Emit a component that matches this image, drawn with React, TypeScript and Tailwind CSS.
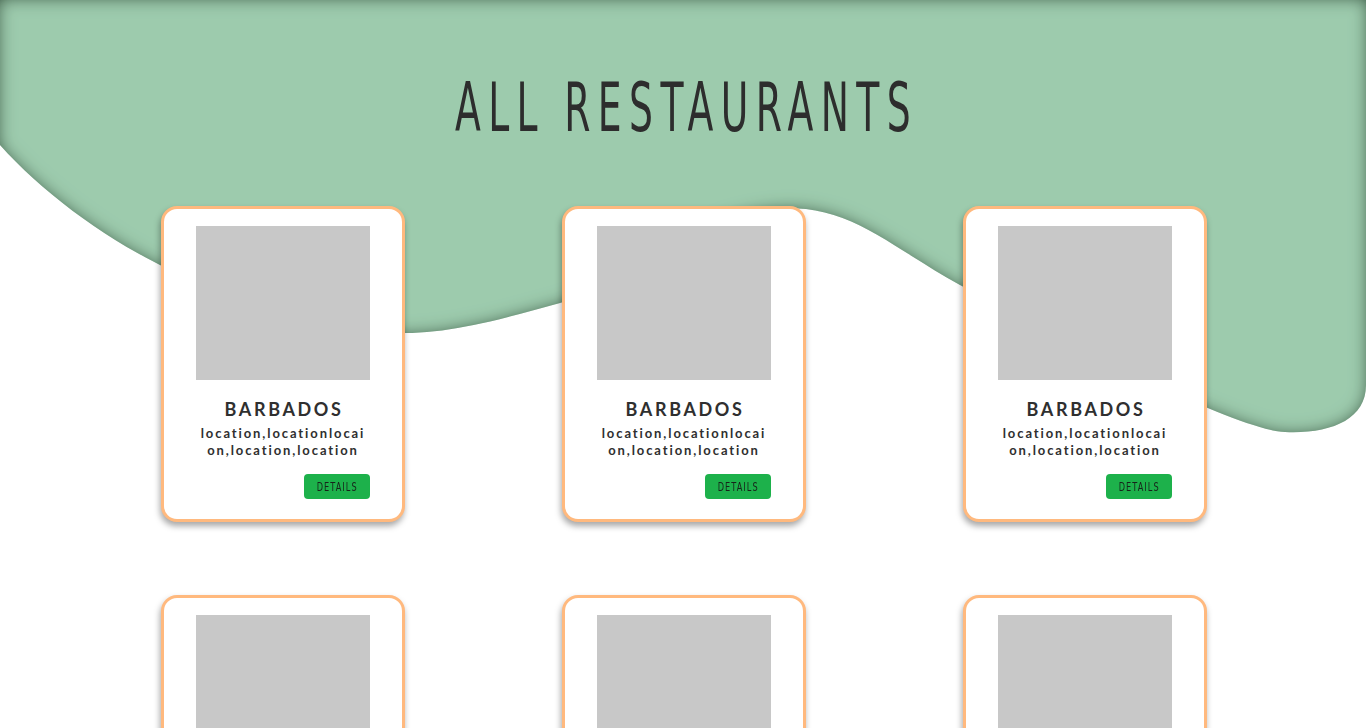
import React from 'react';

const cards = Array.from({ length: 6 }, () => ({
  name: 'BARBADOS',
  location: 'location,locationlocaion,location,location',
}));

const Blob = () => (
  <svg
    className="absolute left-0 top-0 w-[1366px] h-[440px]"
    viewBox="0 0 1366 440"
    preserveAspectRatio="none"
  >
    <defs>
      <filter id="inner" x="-5%" y="-10%" width="110%" height="120%">
        <feComponentTransfer in="SourceAlpha">
          <feFuncA type="table" tableValues="1 0" />
        </feComponentTransfer>
        <feGaussianBlur stdDeviation="8" />
        <feOffset dx="0" dy="0" result="offsetblur" />
        <feFlood floodColor="#1d4429" floodOpacity="0.95" />
        <feComposite in2="offsetblur" operator="in" />
        <feComposite in2="SourceAlpha" operator="in" />
        <feMerge>
          <feMergeNode in="SourceGraphic" />
          <feMergeNode />
        </feMerge>
      </filter>
    </defs>
    <path
      filter="url(#inner)"
      fill="#9dcbad"
      d="M0 0 L1366 0 L1366 385 C1366 420 1330 434 1285 432 C1240 430 1100 360 960 285 C900 252 860 215 806 209 C700 200 640 280 560 303 C500 320 450 333 405 333 C320 333 230 300 160 265 C100 235 40 190 0 145 Z"
    />
  </svg>
);

const Card = ({ name, location }: { name: string; location: string }) => (
  <div className="w-[244px] h-[316px] bg-white border-[3px] border-[#ffb97e] rounded-[16px] shadow-[-1px_4px_6px_rgba(0,0,0,0.35)] pt-[17px] px-[32px] flex flex-col items-center">
    <div className="w-[174px] h-[154px] bg-[#c8c8c8] shrink-0" />
    <h2 className="mt-[18px] pl-[2px] font-['Lato',sans-serif] font-bold text-[18px] leading-[22px] tracking-[2.6px] text-[#2f2f2f]">
      {name}
    </h2>
    <p className="mt-[5px] w-[168px] text-center break-all font-['Lato',sans-serif] font-bold text-[13px] leading-[17px] tracking-[1.9px] text-[#2f2f2f]">
      {location}
    </p>
    <div className="w-[174px] flex justify-end mt-[15px]">
      <button className="w-[66px] h-[25px] rounded-[4px] bg-[#1db14b] flex items-center justify-center">
        <span className="inline-block scale-x-[0.7] font-['DejaVu_Sans_Condensed','DejaVu_Sans',sans-serif] text-[13px] tracking-[1.5px] text-[#17231a]">
          DETAILS
        </span>
      </button>
    </div>
  </div>
);

const App = () => {
  return (
    <div className="relative min-h-screen bg-white overflow-hidden">
      <Blob />
      <div className="relative pt-[74px] pb-[80px]">
        <div className="flex justify-center">
          <h1 className="inline-block scale-x-[0.616] whitespace-nowrap pl-[12px] font-['DejaVu_Sans_Condensed','DejaVu_Sans',sans-serif] text-[68px] leading-none tracking-[12px] text-[#2d2d2d]">
            ALL RESTAURANTS
          </h1>
        </div>
        <div className="mt-[64px] grid grid-cols-[repeat(3,244px)] gap-x-[157px] gap-y-[73px] justify-center pl-[2px]">
          {cards.map((c, i) => (
            <Card key={i} name={c.name} location={c.location} />
          ))}
        </div>
      </div>
    </div>
  );
};

export default App;
